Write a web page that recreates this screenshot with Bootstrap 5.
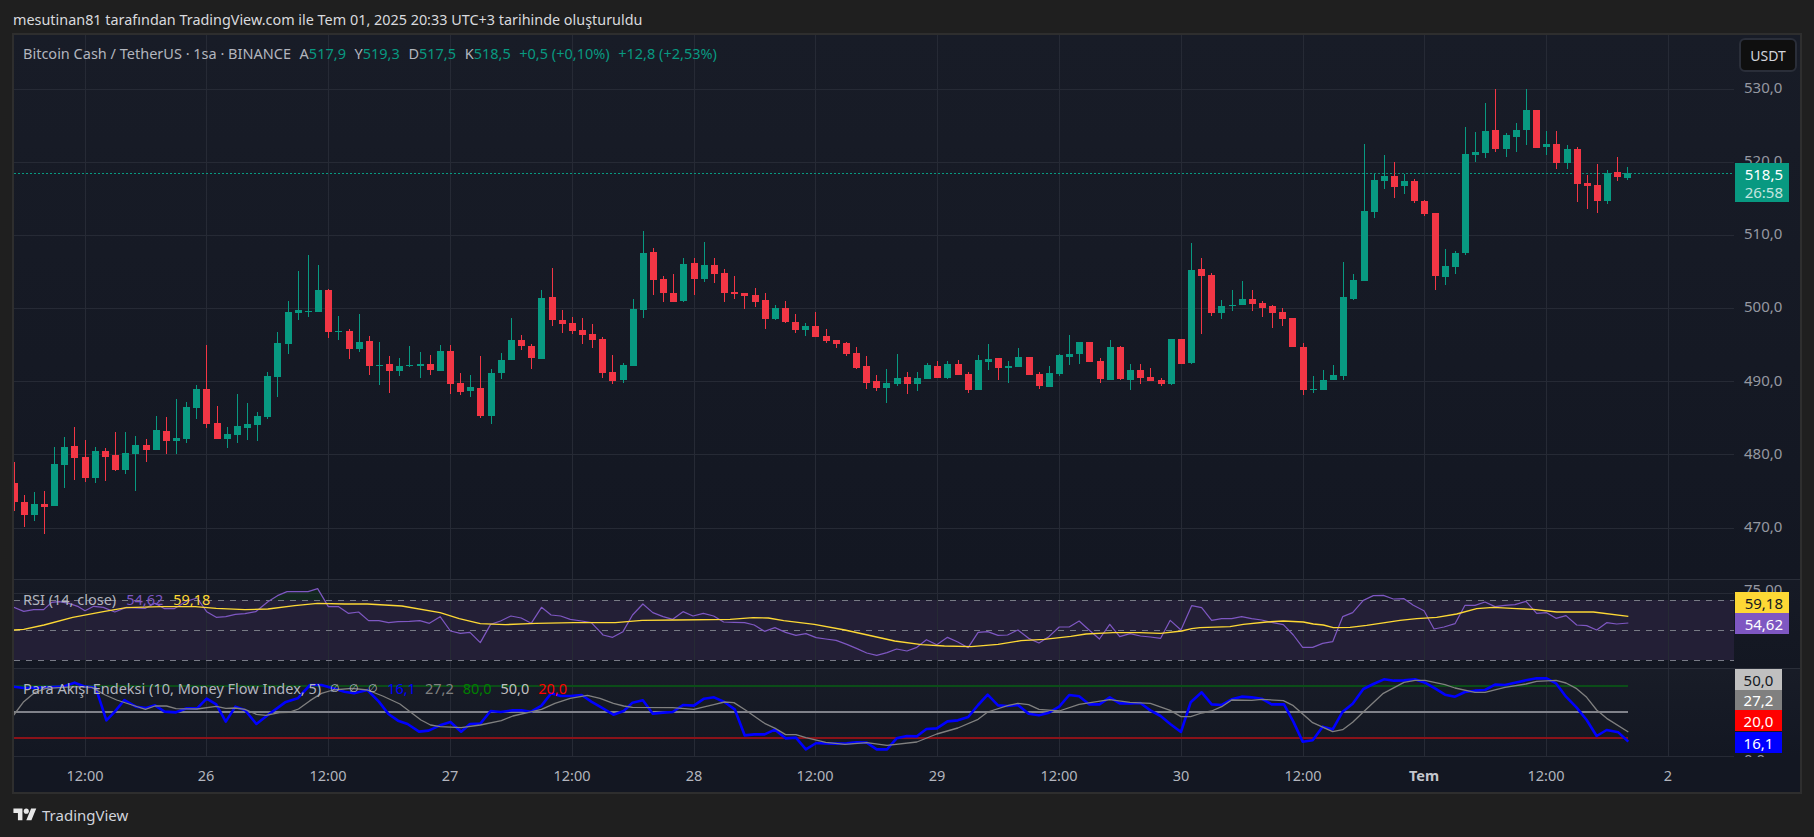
<!doctype html>
<html lang="tr">
<head>
<meta charset="utf-8">
<title>Bitcoin Cash / TetherUS</title>
<link href="https://cdn.jsdelivr.net/npm/bootstrap@5.3.0/dist/css/bootstrap.min.css" rel="stylesheet">
<style>
html,body{height:100%}
body{background:#1f1f1f;color:#d1d4dc;font-family:"Noto Sans","Open Sans",sans-serif;font-size:14.5px;line-height:1.2;overflow:hidden}
.snap-title{height:33px;padding-left:13px;padding-top:11px;color:#d9dade;font-size:14.4px;line-height:18px;white-space:nowrap}
.chart-frame{margin-left:12px;width:1790px;height:761px;border:2px solid #2e2e2e;background:#131722}
.pane{position:relative;overflow:hidden}
.pane svg{position:absolute;left:0;top:0;display:block}
.pane-main{height:544px;background:linear-gradient(#181c27,#131722)}
.pane-rsi{height:89px;background:linear-gradient(#161a25,#131722);border-top:1px solid #2a2e39}
.pane-mfi{height:89px;background:linear-gradient(#181c27,#131722);border-top:1px solid #2a2e39}
.pane-time{height:35px;background:#131722}
.legend-row{position:absolute;left:9px;display:flex;white-space:nowrap;color:#b2b5be;line-height:18px}
.legend-main{top:9px;column-gap:8.6px}
.legend-rsi{top:10px;column-gap:10px}
.legend-mfi{top:10px;column-gap:9px}
.null-mark{font-size:11px;line-height:18px}
.up{color:#089981}
.axis-tick{position:absolute;left:1730px;color:#9598a1;font-size:15px;line-height:18px;white-space:nowrap}
.time-tick{position:absolute;top:9px;color:#b2b5be;line-height:18px;transform:translateX(-50%);white-space:nowrap}
.time-tick.strong{font-weight:700;color:#c4c7ce}
.unit-btn{position:absolute;left:1725px;top:3px;width:58px;height:34px;background:#0f0f0f;border:2px solid #2a2e39;border-radius:6px;color:#d1d4dc;font-size:14px;display:flex;align-items:center;justify-content:center;padding:0}
.tag{position:absolute;left:1721px;display:flex;align-items:center;justify-content:flex-end;padding-right:6px;font-size:15px;line-height:18px}
.tag-wide{width:54px}
.tag-mid{width:47px;justify-content:center;padding-right:0}
.price-tag{top:128px;height:39px;background:#089981;color:#fff;flex-direction:column;align-items:flex-end;justify-content:center}
.price-tag small{font-size:inherit;opacity:.75;line-height:18px}
.snap-foot{height:43px;padding-left:13px;padding-bottom:2px;color:#d1d4dc;font-size:15px;gap:5px}
</style>
</head>
<body>
<div class="d-flex flex-column vh-100">
  <div class="snap-title">mesutinan81 tarafından TradingView.com ile Tem 01, 2025 20:33 UTC+3 tarihinde oluşturuldu</div>
  <div class="chart-frame d-flex flex-column">
    <div class="pane pane-main">
      <svg id="svgMain" width="1786" height="544" viewBox="14 35 1786 544" shape-rendering="crispEdges"></svg>
      <div class="legend-row legend-main">
        <span>Bitcoin Cash / TetherUS · 1sa · BINANCE</span><span>A<span class="up">517,9</span></span><span>Y<span class="up">519,3</span></span><span>D<span class="up">517,5</span></span><span>K<span class="up">518,5</span></span><span class="up">+0,5 (+0,10%)</span><span class="up">+12,8 (+2,53%)</span>
      </div>
      <div class="axis-tick" style="top:43px">530,0</div>
      <div class="axis-tick" style="top:116px">520,0</div>
      <div class="axis-tick" style="top:189px">510,0</div>
      <div class="axis-tick" style="top:262px">500,0</div>
      <div class="axis-tick" style="top:336px">490,0</div>
      <div class="axis-tick" style="top:409px">480,0</div>
      <div class="axis-tick" style="top:482px">470,0</div>
      <button type="button" class="btn unit-btn">USDT</button>
      <div class="tag tag-wide price-tag"><span>518,5</span><small>26:58</small></div>
    </div>
    <div class="pane pane-rsi">
      <svg id="svgRsi" width="1786" height="88" viewBox="14 580 1786 88"></svg>
      <div class="legend-row legend-rsi"><span>RSI (14, close)</span><span style="color:#7e57c2">54,62</span><span style="color:#fdd835">59,18</span></div>
      <div class="axis-tick" style="top:0">75,00</div>
      <div class="tag tag-wide" style="top:12px;height:21px;background:#fdd835;color:#131722">59,18</div>
      <div class="tag tag-wide" style="top:33px;height:21px;background:#7e57c2;color:#fff">54,62</div>
    </div>
    <div class="pane pane-mfi">
      <svg id="svgMfi" width="1786" height="88" viewBox="14 669 1786 88"></svg>
      <div class="legend-row legend-mfi"><span>Para Akışı Endeksi (10, Money Flow Index, 5)</span><span class="null-mark">∅</span><span class="null-mark">∅</span><span class="null-mark">∅</span><span style="color:#0000ff">16,1</span><span style="color:#808080">27,2</span><span style="color:#008000">80,0</span><span style="color:#c0c0c0">50,0</span><span style="color:#ff0000">20,0</span></div>
      <div class="axis-tick" style="top:81px">0,0</div>
      <div class="tag tag-mid" style="top:0;height:21px;background:#c0c0c0;color:#131722">50,0</div>
      <div class="tag tag-mid" style="top:21px;height:20px;background:#808080;color:#fff">27,2</div>
      <div class="tag tag-mid" style="top:41px;height:21px;background:#ff0000;color:#fff">20,0</div>
      <div class="tag tag-mid" style="top:63px;height:21px;background:#0000ff;color:#fff">16,1</div>
    </div>
    <div class="pane pane-time" id="timeAxis"></div>
  </div>
  <div class="snap-foot d-flex align-items-center">
    <svg width="24" height="18" viewBox="0 0 36 28" aria-hidden="true"><path fill="#e8e8e8" d="M14 22H7V11H0V4h14v18zM28 22h-8l7.5-18h8L28 22z"/><circle fill="#e8e8e8" cx="20" cy="8" r="4"/></svg>
    <span>TradingView</span>
  </div>
</div>
<script>
const GREEN='#089981',RED='#f23645',G='#262a35',NS='http://www.w3.org/2000/svg';
const vgrid=[85,206,328,450,572,694,815,937,1059,1181,1303,1424,1546,1668];
const ticks=['12:00','26','12:00','27','12:00','28','12:00','29','12:00','30','12:00','Tem','12:00','2'];
// candles: zoom x, wick top, body top, body bottom, wick bottom, up(1)/down(0)
const z5=[[43,666,729,785,812,0],[73,765,786,825,860,0],[103,756,792,825,843,1],[133,753,792,801,881,0],[163,621,672,798,798,1],[193,591,621,675,744,1],[223,561,618,654,720,0],[256,600,651,714,726,0],[286,621,633,714,729,1],[316,624,633,651,723,0],[346,576,645,690,693,0],[376,576,639,690,702,1],[406,588,615,642,753,1],[439,597,615,630,666,0],[469,528,570,630,630,1],[499,531,573,603,642,0],[529,477,594,603,642,1],[559,486,501,597,609,1],[589,435,447,504,537,1],[619,315,447,552,564,0],[652,498,549,597,597,0],[682,561,582,597,624,1],[712,462,558,585,609,1],[742,489,552,564,600,1],[772,516,528,555,603,1],[802,396,408,531,537,1],[832,276,309,411,471,1],[865,183,216,312,342,1],[895,93,210,219,240,1],[925,45,213,216,231,1],[955,75,150,216,216,1],[985,148,150,276,294,0],[1015,228,273,276,300,1],[1048,267,273,327,357,0],[1078,222,306,327,336,1],[1108,288,303,378,405,0],[1138,306,375,378,435,1],[1168,348,372,393,459,0],[1198,354,378,393,408,1],[1228,318,375,378,381,1],[1261,336,372,378,414,1],[1291,345,372,390,405,0],[1321,315,333,393,393,1]];
const z6=[[1,375,393,492,522,0],[31,459,489,516,525,0],[61,465,501,513,531,1],[91,408,504,588,594,0],[124,447,459,588,612,1],[154,399,420,459,477,1],[184,294,360,420,420,1],[214,345,360,378,390,0],[244,372,378,414,447,0],[274,210,234,417,417,1],[307,144,231,300,318,0],[337,270,300,312,339,0],[367,291,309,333,342,0],[397,294,330,345,372,0],[427,312,342,360,384,0],[457,351,357,459,474,0],[487,405,456,483,492,0],[520,429,435,480,489,1],[550,237,267,438,438,1],[580,33,99,270,294,1],[610,84,96,180,225,0],[640,168,177,219,246,0],[670,162,219,246,246,0],[700,114,132,243,246,1],[733,114,129,177,225,0],[763,66,135,177,186,1],[793,114,135,162,189,0],[823,147,159,219,246,0],[853,168,216,222,237,0],[883,219,219,228,267,0],[916,204,225,246,261,0],[946,219,240,297,327,0],[976,255,264,297,300,1],[1006,243,264,306,309,0],[1036,282,306,330,339,0],[1066,309,318,330,348,1],[1096,276,318,351,351,0],[1129,327,348,363,369,0],[1159,360,360,372,384,0],[1189,366,369,402,408,0],[1219,381,399,444,447,0],[1249,408,438,489,507,0],[1279,465,483,504,513,0],[1309,447,489,504,549,1],[1342,402,474,492,498,1]];
const z7=[[22,456,471,492,522,0],[52,456,474,492,513,1],[82,429,435,477,477,1],[112,423,438,474,474,0],[142,423,432,474,477,1],[175,420,432,465,465,0],[205,456,462,510,519,0],[235,405,420,510,510,1],[265,372,417,426,450,1],[295,414,414,444,480,0],[325,423,438,444,489,1],[355,384,411,441,441,1],[388,411,411,465,465,0],[418,456,462,498,507,0],[448,438,459,501,501,1],[478,402,405,462,468,1],[508,345,402,411,435,1],[538,366,366,402,432,1],[568,366,366,426,426,0],[601,414,423,477,489,0],[631,360,381,480,480,1],[661,378,381,477,480,0],[691,432,450,480,510,1],[721,432,450,474,492,0],[751,444,471,483,483,0],[784,474,480,492,498,0],[814,357,357,492,495,1],[844,357,357,432,432,0],[874,69,150,429,432,1],[904,114,147,168,342,0],[934,159,165,279,288,0],[964,240,258,279,297,1],[997,210,255,258,273,1],[1027,183,237,255,255,1],[1057,210,237,252,273,0],[1087,243,249,264,291,0],[1117,255,258,279,324,0],[1147,264,276,297,318,0],[1177,294,294,381,381,0],[1210,369,381,510,525,0],[1240,468,507,510,519,1],[1270,450,480,510,510,1],[1300,435,465,480,480,1],[1330,126,231,468,480,1]];
const z8=[[310,612,630,687,690,1],[343,222,423,633,633,1],[373,309,330,426,444,1],[403,255,318,333,357,1],[433,276,318,351,384,0],[463,312,333,348,372,1],[493,327,333,393,399,0],[523,390,393,432,438,0],[556,429,429,618,660,0],[586,537,588,621,645,1],[616,543,549,591,612,1],[646,171,252,549,555,1],[676,186,246,255,276,1],[706,99,183,249,264,1],[736,57,180,237,246,0],[769,189,195,237,261,1],[799,159,180,201,246,1],[829,57,120,180,225,1],[859,120,120,234,234,0],[889,183,222,231,255,1],[919,183,222,279,297,0],[952,225,237,279,297,1],[982,231,237,342,396,0],[1012,315,339,348,417,0],[1042,282,345,393,429,0],[1072,300,309,393,402,1],[1102,261,306,321,333,0],[1132,291,309,324,330,1]];
function el(svg,n,a){const e=document.createElementNS(NS,n);for(const k in a)e.setAttribute(k,a[k]);svg.appendChild(e);return e;}
function rect(svg,x,y,w,h,f){return el(svg,'rect',{x,y,width:w,height:h,fill:f});}
function hline(svg,y,c,h){rect(svg,14,y,1720,h||1,c);}
function vgridOn(svg,top,bot){vgrid.forEach(x=>rect(svg,x,top,1,bot-top,G));}
function poly(svg,pts,c,w){return el(svg,'polyline',{points:pts.map(p=>p.join(',')).join(' '),fill:'none',stroke:c,'stroke-width':w,'stroke-linejoin':'round','shape-rendering':'geometricPrecision'});}
// convert zoom coordinates to page coordinates
const Z9=a=>a.map(([x,y])=>[x/2.613,570+y/3]),Z10=a=>a.map(([x,y])=>[600+x/2.613,570+y/3]),Z11=a=>a.map(([x,y])=>[1150+x/3,570+y/3]);

// main pane
const m=document.getElementById('svgMain');
vgridOn(m,35,579);
[89,162,235,308,381,454,528].forEach(y=>hline(m,y,G));
for(let x=14;x<1734;x+=4)rect(m,x,173,1.5,1,GREEN);
function candles(list,ox,oy){list.forEach(([zx,wt,bt,bb,wb,up])=>{const x=Math.floor(ox+zx/3),c=up?GREEN:RED;
  rect(m,x,oy+wt/3,1,(wb-wt)/3,c);rect(m,x-3,oy+bt/3,7,(bb-bt)/3,c);});}
candles(z5,0,240);candles(z6,450,220);candles(z7,900,220);candles(z8,1250,70);

// RSI pane
const r=document.getElementById('svgRsi');
r.setAttribute('shape-rendering','crispEdges');
rect(r,14,600,1720,60,'#231f36');
vgridOn(r,580,668);
hline(r,593,G);
const dash=y=>{el(r,'line',{x1:14,x2:1734,y1:y+.5,y2:y+.5,stroke:'#787b86','stroke-width':1,'stroke-dasharray':'6 6'});};
[600,630,660].forEach(dash);
const rsi=[...Z9([[36,112],[62,124],[88,119],[114,119],[135,97],[155,95],[180,100],[205,110],[222,122],[245,109],[270,112],[300,126],[330,112],[380,115],[405,100],[430,116],[455,116],[485,95],[515,84],[540,125],[565,142],[590,140],[615,133],[640,131],[668,125],[700,95],[725,77],[750,65],[778,65],[805,65],[830,56],[858,110],[885,110],[910,130],[937,126],[963,152],[990,152],[1015,158],[1040,155],[1070,154],[1097,152],[1122,160],[1150,140],[1177,183],[1203,190],[1228,187],[1255,218],[1282,163],[1308,153],[1335,138],[1362,144],[1388,160],[1415,112],[1440,135],[1465,138],[1490,148],[1520,153],[1545,158]]),
...Z10([[0,185],[8,195],[33,202],[60,185],[85,135],[112,102],[138,128],[165,140],[190,148],[217,125],[243,138],[270,130],[297,138],[323,156],[350,157],[378,158],[403,165],[430,184],[457,173],[485,187],[512,196],[538,191],[565,203],[590,207],[617,211],[645,223],[670,235],[697,249],[723,256],[750,248],[775,237],[802,243],[828,232],[853,209],[880,224],[908,202],[935,216],[962,233],[988,187],[1013,185],[1040,196],[1065,195],[1092,180],[1120,205],[1147,219],[1173,200],[1200,171],[1226,171],[1252,153],[1278,180],[1305,207],[1332,163],[1358,200],[1385,191],[1412,198],[1438,201],[1465,205],[1490,151],[1518,180]]),
...Z11([[125,107],[155,113],[185,151],[215,146],[245,146],[275,140],[305,146],[335,150],[365,157],[400,164],[430,195],[458,232],[488,232],[518,220],[548,215],[578,140],[608,128],[640,91],[670,77],[700,76],[730,87],[762,86],[790,106],[822,122],[852,177],[882,171],[915,161],[945,106],[975,106],[1005,96],[1035,110],[1065,106],[1095,104],[1128,94],[1160,130],[1190,128],[1218,145],[1248,137],[1280,165],[1310,167],[1340,180],[1370,158],[1400,162],[1435,159]])];
const rsiMa=[...Z9([[36,180],[62,178],[115,165],[190,142],[270,125],[330,113],[420,110],[510,110],[565,115],[640,119],[700,117],[770,107],[830,100],[900,102],[960,102],[1050,108],[1150,128],[1200,146],[1255,161],[1320,164],[1400,160],[1500,158]]),
...Z10([[0,158],[40,158],[110,151],[200,150],[340,148],[400,143],[440,144],[480,152],[560,163],[640,180],[770,213],[840,224],[900,228],[970,230],[1040,223],[1100,212],[1160,208],[1230,199],[1270,192],[1340,188],[1410,188],[1465,190],[1520,183]]),
...Z11([[125,176],[150,173],[240,170],[280,163],[350,156],[400,153],[460,156],[490,162],[520,165],[550,173],[600,172],[650,166],[750,151],[800,146],[860,142],[920,132],[980,116],[1030,112],[1100,116],[1150,118],[1220,126],[1330,126],[1435,139]])];
el(r,'polygon',{points:Z9([[700,91],[725,77],[750,65],[778,65],[805,65],[830,56],[848,91]]).map(p=>p.join(',')).join(' '),fill:'rgba(0,128,0,.12)','shape-rendering':'geometricPrecision'});
poly(r,rsi,'#7e57c2',1.2);
poly(r,rsiMa,'#fdd835',1.4);

// MFI pane
const f=document.getElementById('svgMfi');
f.setAttribute('shape-rendering','crispEdges');
vgridOn(f,669,757);
rect(f,14,756,1720,1,G);
rect(f,14,685,1614,2,'#0b4d18');rect(f,14,711,1614,2,'#80828a');rect(f,14,737,1614,2,'#8a1219');
const mfi=[...Z9([[36,350],[62,354],[115,352],[165,350],[195,338],[222,350],[250,353],[278,451],[300,425],[325,390],[355,410],[382,414],[405,406],[430,425],[460,427],[488,415],[515,415],[540,386],[565,403],[590,455],[615,410],[640,420],[670,462],[700,435],[745,397],[778,385],[810,345],[840,345],[870,355],[900,365],[925,370],[960,360],[990,395],[1015,432],[1040,452],[1065,462],[1095,485],[1120,482],[1150,466],[1177,456],[1205,485],[1228,462],[1255,461],[1282,423],[1308,426],[1340,421],[1362,421],[1388,425],[1415,407],[1440,370],[1465,378],[1490,378],[1520,375],[1545,395]]),
...Z10([[0,410],[35,434],[62,423],[85,398],[112,391],[138,431],[165,428],[190,426],[217,405],[245,407],[272,386],[298,382],[325,396],[352,418],[378,496],[403,493],[430,493],[457,479],[485,505],[512,503],[538,538],[565,519],[590,520],[617,521],[645,520],[670,517],[697,518],[723,538],[750,538],[775,505],[802,498],[828,499],[853,477],[880,475],[908,454],[935,451],[962,441],[988,405],[1013,374],[1040,406],[1065,408],[1092,405],[1120,431],[1147,436],[1173,428],[1200,410],[1226,375],[1252,379],[1278,403],[1305,403],[1332,382],[1358,400],[1385,400],[1412,399],[1438,421],[1465,438],[1490,462],[1518,486]]),
...Z11([[122,397],[155,367],[185,403],[215,405],[245,388],[275,380],[305,382],[335,386],[365,403],[402,403],[430,455],[458,515],[488,511],[518,470],[548,478],[578,425],[608,401],[640,357],[670,342],[702,328],[732,332],[762,331],[795,328],[825,338],[855,355],[885,374],[915,380],[945,366],[975,362],[1005,360],[1035,344],[1065,345],[1095,338],[1128,331],[1160,325],[1190,325],[1218,340],[1248,380],[1280,413],[1310,450],[1340,498],[1370,480],[1405,487],[1435,515]])];
const mfiMa=[...Z9([[36,435],[62,395],[90,368],[120,355],[200,350],[240,352],[275,375],[305,390],[345,405],[380,418],[405,408],[435,408],[460,416],[515,417],[565,409],[590,415],[615,414],[640,418],[670,433],[695,436],[730,428],[755,427],[780,417],[810,392],[840,370],[870,360],[920,355],[960,360],[1000,378],[1045,402],[1075,428],[1100,450],[1125,465],[1150,470],[1205,473],[1255,465],[1310,452],[1340,438],[1390,425],[1415,418],[1450,400],[1490,385],[1535,376]]),
...Z10([[0,385],[35,400],[62,408],[85,412],[190,413],[245,418],[300,403],[325,396],[350,398],[380,420],[430,460],[458,475],[485,494],[512,494],[538,503],[590,517],[640,523],[697,518],[750,526],[828,516],[880,492],[935,474],[988,448],[1013,426],[1065,407],[1092,400],[1120,404],[1147,418],[1200,423],[1252,403],[1332,389],[1385,397],[1438,400],[1490,421],[1518,440]]),
...Z11([[122,440],[155,429],[185,423],[215,410],[245,390],[305,391],[335,388],[400,392],[430,407],[488,458],[548,485],[578,479],[608,457],[640,426],[700,370],[762,337],[795,331],[825,331],[885,344],[915,354],[975,367],[1005,367],[1065,352],[1128,342],[1160,334],[1218,331],[1248,339],[1280,356],[1310,382],[1340,420],[1370,445],[1435,486]])];
poly(f,mfi,'#0000ff',2.6);
poly(f,mfiMa,'#808080',1.3);

// time axis labels
const t=document.getElementById('timeAxis');
ticks.forEach((s,i)=>{const d=document.createElement('div');d.className='time-tick'+(s==='Tem'?' strong':'');d.style.left=(vgrid[i]-14)+'px';d.textContent=s;t.appendChild(d);});
</script>
<script src="https://cdn.jsdelivr.net/npm/bootstrap@5.3.0/dist/js/bootstrap.bundle.min.js"></script>
</body>
</html>
